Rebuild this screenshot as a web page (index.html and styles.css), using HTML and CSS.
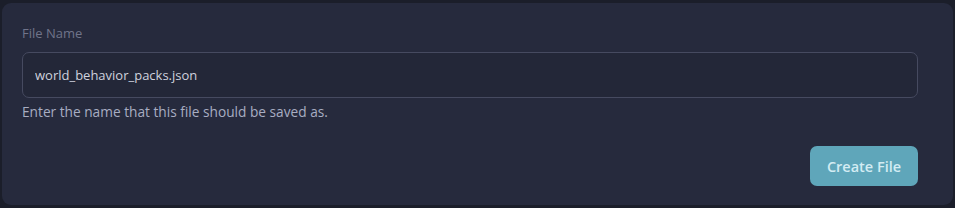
FILE: index.html
```html
<!DOCTYPE html>
<html lang="en">
<head>
  <meta charset="UTF-8" />
  <title>Create File</title>
  <link rel="stylesheet" href="styles.css">
</head>
<body>

<div class="panel">
  <form class="file-form">
    <label for="fileName" class="field-label">File Name</label>
    <input type="text" id="fileName" class="field-input" value="world_behavior_packs.json">
    <p class="field-help">Enter the name that this file should be saved as.</p>
    <div class="actions">
      <button type="submit" class="create-btn">Create File</button>
    </div>
  </form>
</div>

</body>
</html>
```

FILE: styles.css
```css
html, body {
  height: 100%;
}
body {
  margin: 0;
  padding: 3px 2px 3px 2px;
  box-sizing: border-box;
  background-color: #1b1e2a;
  font-family: 'Open Sans', 'Noto Sans', sans-serif;
}
.panel {
  height: 100%;
  box-sizing: border-box;
  padding: 21px 35px 19px 20px;
  background-color: #262a3d;
  border-radius: 9px;
}
.file-form {
  display: flex;
  flex-direction: column;
}
.field-label {
  font-size: 13px;
  line-height: 18px;
  color: #70748a;
  margin-bottom: 10px;
}
.field-input {
  height: 46px;
  box-sizing: border-box;
  padding: 0 12px;
  background-color: #232738;
  border: 1px solid #464a60;
  border-radius: 7px;
  color: #cfd2de;
  font-family: inherit;
  font-size: 13px;
  outline: none;
}
.field-help {
  margin: 5px 0 0;
  font-size: 13.7px;
  line-height: 18px;
  color: #a8adc2;
}
.actions {
  display: flex;
  justify-content: flex-end;
  margin-top: 25px;
}
.create-btn {
  width: 108px;
  height: 40px;
  border: none;
  border-radius: 7px;
  background-color: #5fa6ba;
  color: #d3ecf3;
  font-family: inherit;
  font-size: 14.5px;
  font-weight: 600;
  cursor: pointer;
}
```
